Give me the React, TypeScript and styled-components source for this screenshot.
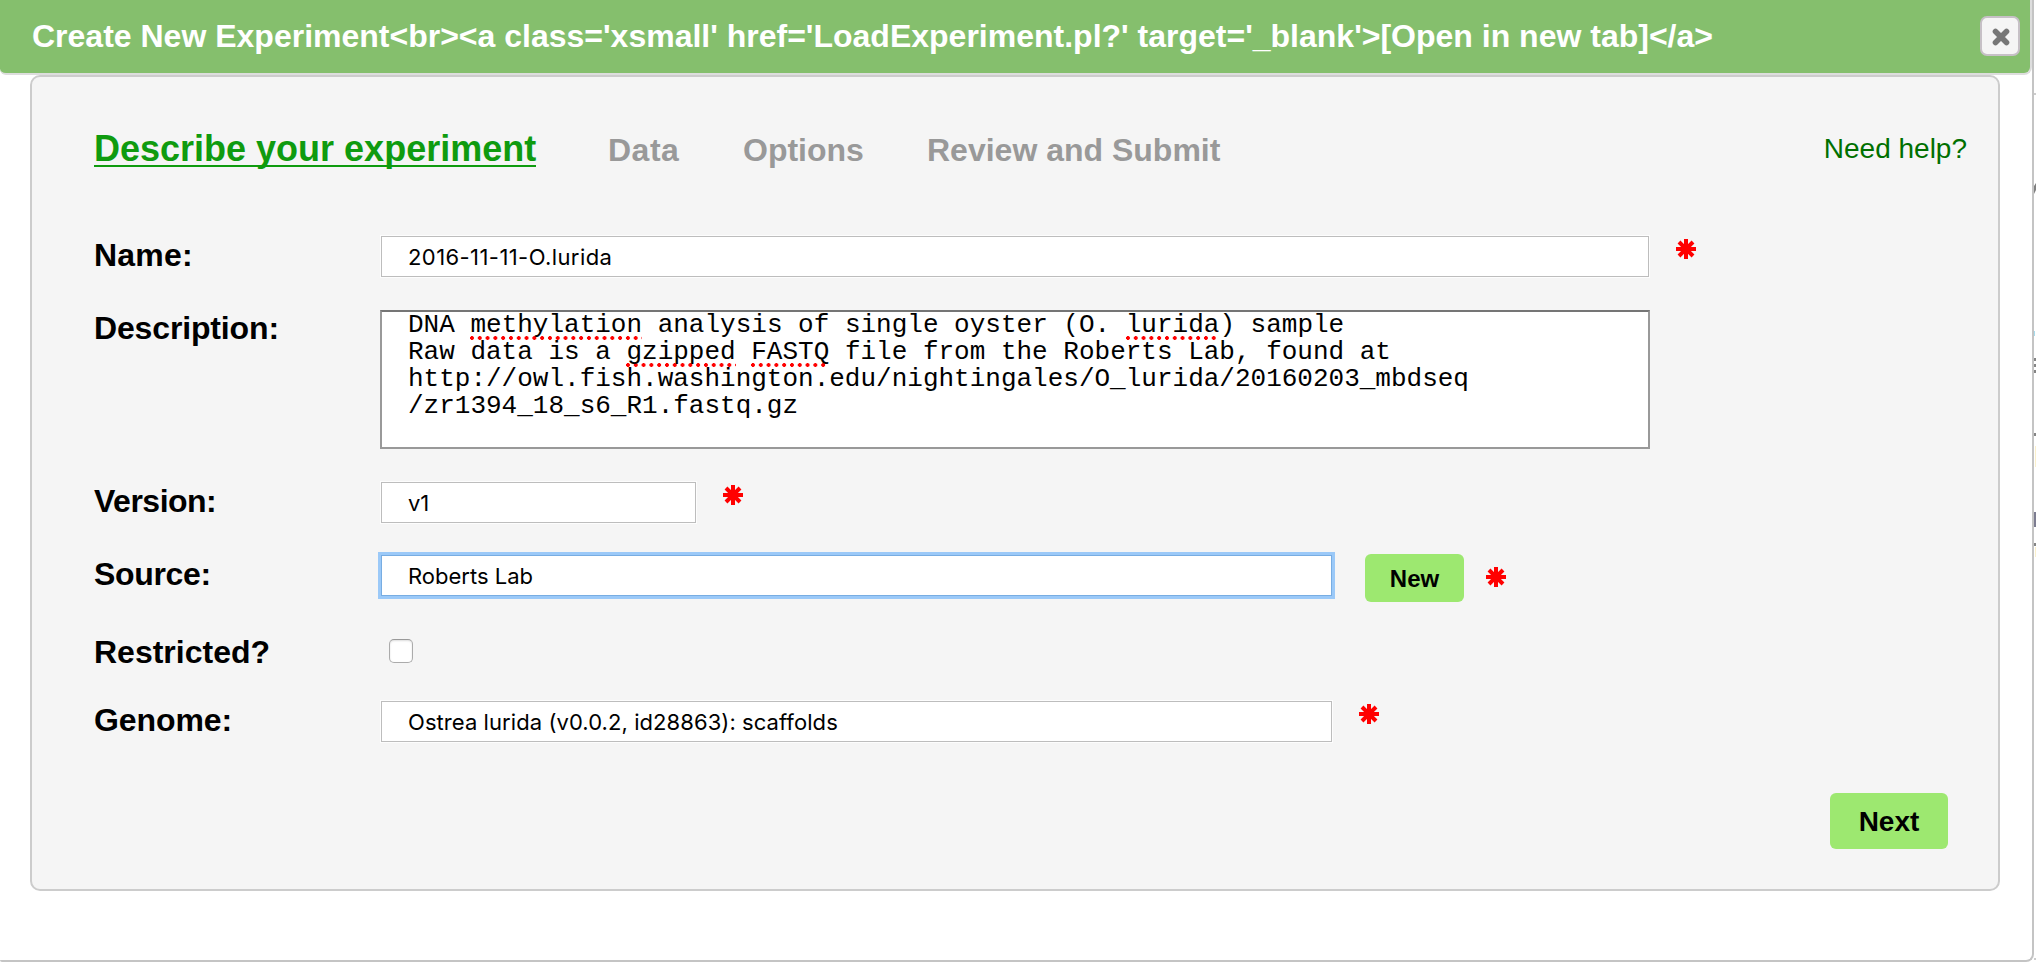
import React from 'react';
import styled, { createGlobalStyle, css } from 'styled-components';

const GlobalStyle = createGlobalStyle`
  * { box-sizing: border-box; }
  body {
    margin: 0;
    background: #fff;
    color: #000;
    font-family: "Liberation Sans", Arial, Helvetica, sans-serif;
    overflow: hidden;
  }
`;

const Page = styled.div`
  display: flex;
  width: 2036px;
  height: 964px;
`;

const Dialog = styled.div`
  width: 2034px;
  height: 962px;
  border: solid #c4c4c4;
  border-width: 0 2px 2px 0;
  border-radius: 0 0 8px 2px;
  background: #fff;
`;

const TitleBar = styled.header`
  display: flex;
  align-items: flex-start;
  justify-content: space-between;
  width: 2032px;
  height: 75px;
  padding: 16px 10px 0 32px;
  border: solid #ddd;
  border-width: 0 2px 2px 0;
  border-radius: 0 0 8px 6px;
  background: #85bf6d;
`;

const Title = styled.h1`
  margin: 2px 0 0;
  font-size: 32px;
  line-height: 36px;
  font-weight: bold;
  color: #fff;
  white-space: nowrap;
`;

const CloseButton = styled.button`
  display: flex;
  align-items: center;
  justify-content: center;
  width: 40px;
  height: 40px;
  padding: 2px 0 0 2px;
  border: 2px solid #c6c0c6;
  border-radius: 7px;
  background: #f5f5f5;
`;

const Panel = styled.main`
  display: flex;
  flex-direction: column;
  width: 1970px;
  height: 816px;
  margin-left: 30px;
  padding: 51px 31px 0 62px;
  border: 2px solid #ccc;
  border-radius: 10px;
  background: #f5f5f5;
`;

const Steps = styled.nav`
  display: flex;
  align-items: flex-start;
  height: 107px;
`;

const Step = styled.a<{ $active?: boolean; $width: number; $spacing?: number }>`
  flex: none;
  width: ${p => p.$width}px;
  padding-top: 4px;
  font-size: 32px;
  line-height: 36px;
  font-weight: bold;
  color: #999;
  white-space: nowrap;
  letter-spacing: ${p => p.$spacing ?? 0}px;
  ${p => p.$active && css`
    padding-top: 0;
    font-size: 36px;
    line-height: 41px;
    color: #0f9b0f;
    span {
      display: inline-block;
      height: 39px;
      border-bottom: 2px solid #0f9b0f;
    }
  `}
`;

const HelpLink = styled.a`
  margin-left: auto;
  padding-top: 5px;
  font-size: 28px;
  line-height: 32px;
  color: #007000;
`;

const Row = styled.div<{ $height: number }>`
  display: flex;
  align-items: flex-start;
  height: ${p => p.$height}px;
`;

const Label = styled.label<{ $drop?: number; $spacing?: number }>`
  flex: none;
  width: 286px;
  padding-top: ${p => p.$drop ?? 0}px;
  font-size: 32px;
  line-height: 36px;
  font-weight: bold;
  letter-spacing: ${p => p.$spacing ?? 0}px;
  white-space: nowrap;
`;

const TextField = styled.input<{ $width: number; $focused?: boolean; $spacing?: number }>`
  flex: none;
  width: ${p => p.$width}px;
  height: 41px;
  margin: 1px;
  padding: 0 26px;
  border: 1px solid ${p => (p.$focused ? '#78ade2' : '#bdbdbd')};
  border-radius: 0;
  outline: none;
  background: #fff;
  box-shadow: ${p => (p.$focused ? '0 0 0 3px #9bc9f8' : '0 0 0 1px #fdfdfd')};
  font-family: Inter, sans-serif;
  font-size: 22px;
  letter-spacing: ${p => p.$spacing ?? 0}px;
  color: #000;
`;

const TextArea = styled.div`
  width: 1270px;
  height: 139px;
  padding: 0 26px;
  border: 2px solid #999;
  border-top-color: #757575;
  background: #fff;
  font-family: "Liberation Mono", "Courier New", monospace;
  font-size: 26px;
  line-height: 27px;
  white-space: pre;
`;

const Misspelled = styled.span`
  background: radial-gradient(circle at 2px 2px, #f00 1.6px, transparent 2.2px) 0 100% / 7.8px 4px repeat-x;
`;

const Required = styled.svg<{ $left: number; $top: number }>`
  flex: none;
  width: 20px;
  height: 20px;
  margin: ${p => p.$top}px 0 0 ${p => p.$left}px;
`;

const Button = styled.button<{ $large?: boolean }>`
  flex: none;
  width: ${p => (p.$large ? 118 : 99)}px;
  height: ${p => (p.$large ? 56 : 48)}px;
  padding: ${p => (p.$large ? 2 : 1)}px 0 0;
  border: 0;
  border-radius: 6px;
  background: #9de870;
  font-family: inherit;
  font-size: ${p => (p.$large ? 28 : 24)}px;
  font-weight: bold;
  color: #000;
`;

const NewButton = styled(Button)`
  margin-left: 32px;
`;

const Checkbox = styled.input`
  appearance: none;
  width: 24px;
  height: 24px;
  margin: 5px 0 0 9px;
  border: 1px solid #ababab;
  border-top-color: #999;
  border-radius: 5px;
  background: #fff;
  box-shadow: inset 0 1px 2px #ddd;
`;

const Actions = styled.footer`
  display: flex;
  justify-content: flex-end;
  padding-right: 19px;
`;

const Star = ({ left, top }: { left: number; top: number }) => (
  <Required $left={left} $top={top} viewBox="0 0 20 20">
    <path d="M10 0V20M0 10H20M3 3L17 17M17 3L3 17" stroke="#f00" strokeWidth="4" />
  </Required>
);

const PageEdge = () => (
  <svg width="2" height="964" viewBox="0 0 2 964">
    <path d="M0 93h2v2H0zM0 958h2v2H0z" fill="#ccc" />
    <path d="M0 186L2 183V190L0 194z" fill="#808080" />
    <path d="M0 331h1v5H0z" fill="#a5dcee" />
    <path d="M0 358h2v3H0zM0 364h2v3H0zM0 370h2v3H0zM0 433h2v3H0zM0 543h2v3H0z" fill="#858585" />
    <path d="M1 446h1v21H1zM1 547h1v10H1z" fill="#fbf0cb" />
    <path d="M0 512h2v15H0z" fill="#7d7d91" />
  </svg>
);

export default function App() {
  return (
    <Page>
      <GlobalStyle />
      <Dialog>
        <TitleBar>
          <Title>
            {"Create New Experiment<br><a class='xsmall' href='LoadExperiment.pl?' target='_blank'>[Open in new tab]</a>"}
          </Title>
          <CloseButton aria-label="Close">
            <svg width="20" height="20" viewBox="0 0 20 20">
              <path d="M4.5 4.5L15.5 15.5M15.5 4.5L4.5 15.5" stroke="#777" strokeWidth="5.6" strokeLinecap="round" />
            </svg>
          </CloseButton>
        </TitleBar>
        <Panel>
          <Steps>
            <Step $active $width={514}><span>Describe your experiment</span></Step>
            <Step $width={135} $spacing={0.5}>Data</Step>
            <Step $width={184}>Options</Step>
            <Step $width={300}>Review and Submit</Step>
            <HelpLink>Need help?</HelpLink>
          </Steps>
          <Row $height={75}>
            <Label $drop={2} $spacing={0.2}>Name:</Label>
            <TextField $width={1268} $spacing={0.42} defaultValue="2016-11-11-O.lurida" />
            <Star left={26} top={4} />
          </Row>
          <Row $height={171}>
            <Label $spacing={-0.15}>Description:</Label>
            <TextArea>
              DNA <Misspelled>methylation</Misspelled> analysis of single oyster (O. <Misspelled>lurida</Misspelled>) sample{'\n'}
              Raw data is a <Misspelled>gzipped</Misspelled> <Misspelled>FASTQ</Misspelled> file from the Roberts Lab, found at{'\n'}
              http://owl.fish.washington.edu/nightingales/O_lurida/20160203_mbdseq{'\n'}
              /zr1394_18_s6_R1.fastq.gz
            </TextArea>
          </Row>
          <Row $height={73}>
            <Label $drop={2} $spacing={-0.5}>Version:</Label>
            <TextField $width={315} defaultValue="v1" />
            <Star left={26} top={4} />
          </Row>
          <Row $height={80}>
            <Label $drop={2} $spacing={-0.35}>Source:</Label>
            <TextField $width={951} $focused defaultValue="Roberts Lab" />
            <NewButton>New</NewButton>
            <Star left={22} top={13} />
          </Row>
          <Row $height={66}>
            <Label>Restricted?</Label>
            <Checkbox type="checkbox" />
          </Row>
          <Row $height={93}>
            <Label $drop={2} $spacing={-0.1}>Genome:</Label>
            <TextField $width={951} $spacing={0.07} defaultValue="Ostrea lurida (v0.0.2, id28863): scaffolds" />
            <Star left={26} top={4} />
          </Row>
          <Actions>
            <Button $large>Next</Button>
          </Actions>
        </Panel>
      </Dialog>
      <PageEdge />
    </Page>
  );
}
